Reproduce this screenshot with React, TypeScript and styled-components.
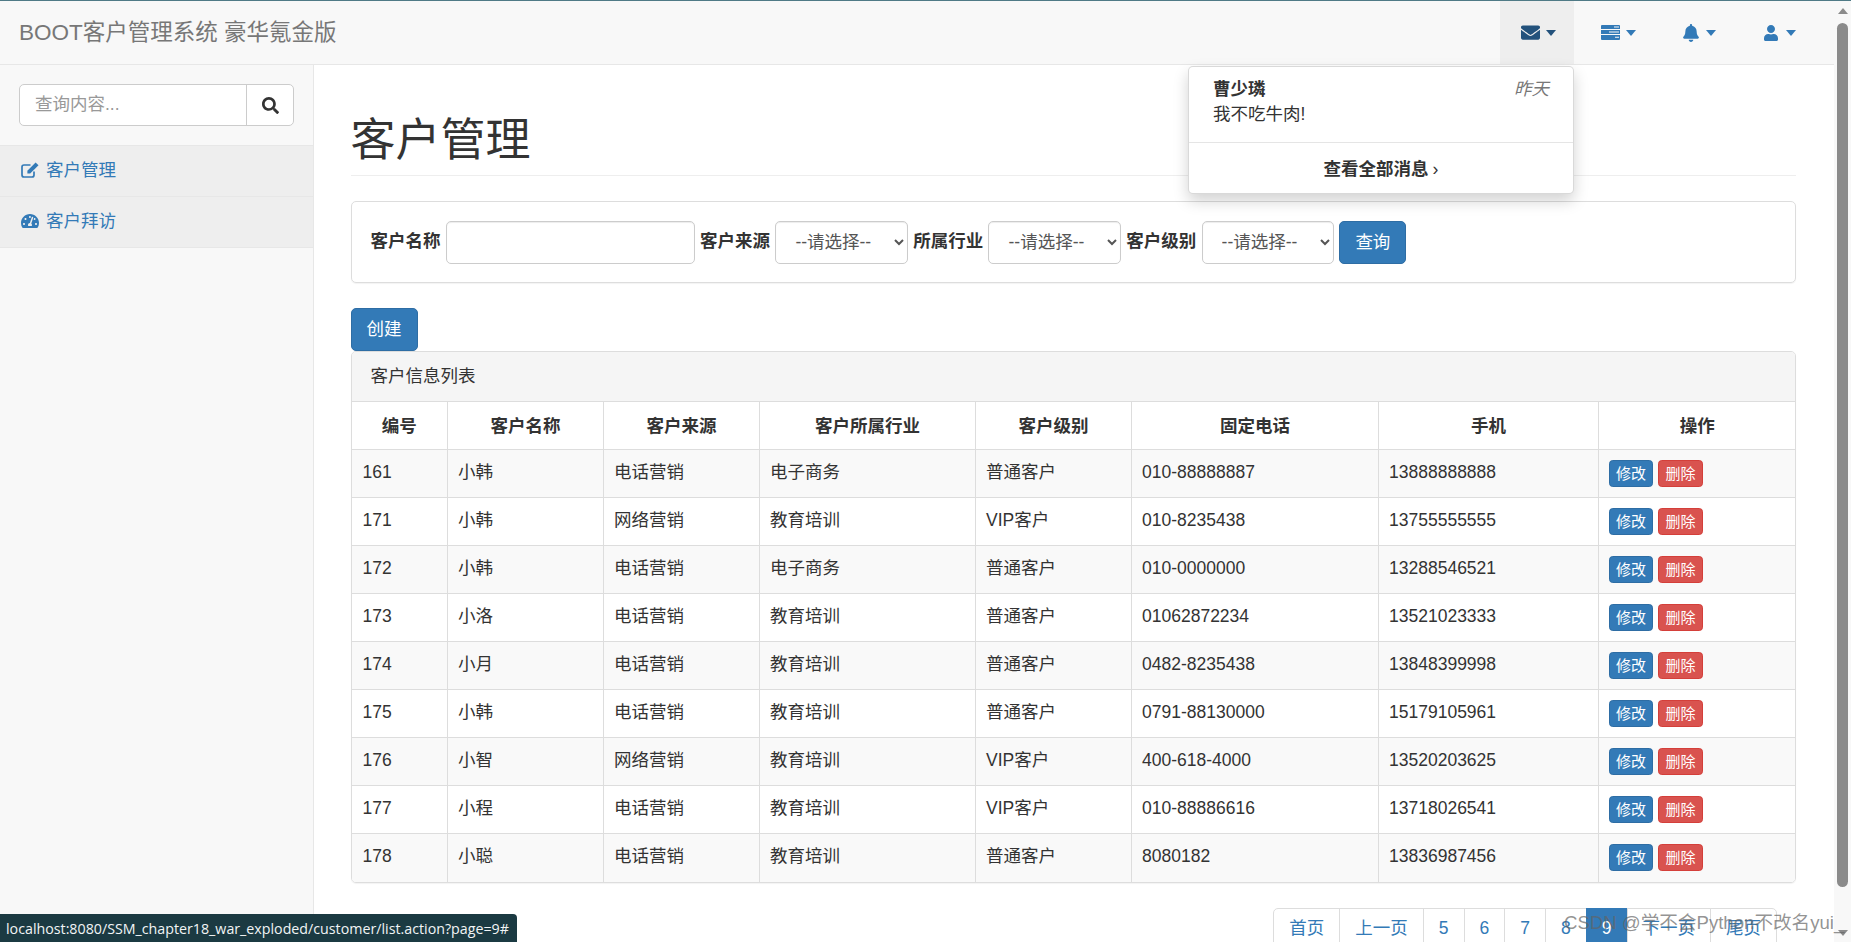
import React from "react";
import styled, { createGlobalStyle } from "styled-components";
import { FaEnvelope, FaBell, FaUser, FaSearch, FaTachometerAlt } from "react-icons/fa";

const Global = createGlobalStyle`
  html, body { margin: 0; padding: 0; height: 100%; overflow: hidden; background: #fff; }
  * { box-sizing: border-box; }
  body {
    font-family: "Liberation Sans", "Noto Sans CJK SC", sans-serif;
    font-size: 17.5px;
    line-height: 25px;
    color: #333;
  }
`;

const Shell = styled.div`
  position: relative;
  display: flex;
  height: 942px;
  border-top: 1px solid #4f7a86;
  overflow: hidden;
`;
const Page = styled.div`
  flex: 1;
  min-width: 0;
  display: flex;
  flex-direction: column;
`;
const Navbar = styled.header`
  height: 64px;
  flex: none;
  display: flex;
  justify-content: space-between;
  background: #f8f8f8;
  border-bottom: 1px solid #e7e7e7;
  padding: 0 20px 0 19px;
`;
const Brand = styled.div`
  font-size: 22.5px;
  line-height: 64px;
  color: #777;
`;
const NavList = styled.div`
  display: flex;
`;
const NavItem = styled.div<{ $active?: boolean }>`
  position: relative;
  display: flex;
  align-items: center;
  gap: 6px;
  height: 63px;
  padding: 0 18px 0 ${(p) => (p.$active ? "21px" : "27px")};
  color: ${(p) => (p.$active ? "#23527c" : "#337ab7")};
  background: ${(p) => (p.$active ? "#eee" : "transparent")};
`;
const IconSlot = styled.span`
  width: 19px;
  height: 19px;
  display: flex;
  align-items: center;
  justify-content: center;
`;
const Caret = styled.span`
  width: 0;
  height: 0;
  border-left: 5.5px solid transparent;
  border-right: 5.5px solid transparent;
  border-top: 6px solid currentColor;
`;
const Dropdown = styled.div`
  position: absolute;
  top: 65px;
  right: 0;
  width: 386px;
  height: 128px;
  background: #fff;
  border: 1px solid rgba(0, 0, 0, 0.15);
  border-radius: 5px;
  box-shadow: 0 7px 15px rgba(0, 0, 0, 0.175);
  z-index: 5;
  color: #333;
`;
const Message = styled.div`
  height: 76px;
  padding: 10px 24px 0;
  border-bottom: 1px solid #e5e5e5;
`;
const MessageHead = styled.div`
  display: flex;
  justify-content: space-between;
  font-weight: bold;
`;
const When = styled.em`
  font-weight: normal;
  color: #777;
`;
const SeeAll = styled.div`
  text-align: center;
  font-weight: bold;
  line-height: 53px;
`;
const Chevron = styled.span`
  font-weight: normal;
  margin-left: 4px;
`;
const Body = styled.div`
  flex: 1;
  min-height: 0;
  display: flex;
`;
const Sidebar = styled.aside`
  width: 314px;
  flex: none;
  background: #f8f8f8;
  border-right: 1px solid #e7e7e7;
`;
const SearchWrap = styled.div`
  height: 81px;
  padding: 19px 19px 0;
  border-bottom: 1px solid #e7e7e7;
`;
const SearchGroup = styled.div`
  display: flex;
  height: 42px;
  background: #fff;
  border: 1px solid #ccc;
  border-radius: 5px;
`;
const SearchInput = styled.input`
  flex: 1;
  min-width: 0;
  border: 0;
  outline: 0;
  background: transparent;
  padding: 0 15px 2px;
  font: inherit;
  &::placeholder { color: #999; }
`;
const SearchButton = styled.div`
  width: 47px;
  flex: none;
  border-left: 1px solid #ccc;
  display: flex;
  align-items: center;
  justify-content: center;
  font-size: 17px;
  color: #333;
`;
const SideItem = styled.div`
  height: 51px;
  display: flex;
  align-items: center;
  gap: 7px;
  padding: 0 0 2px 21px;
  color: #337ab7;
  background: #eee;
  border-bottom: 1px solid #e7e7e7;
  font-size: 17.5px;
`;
const Content = styled.main`
  flex: 1;
  min-width: 0;
  padding: 0 38.5px 0 36.5px;
  overflow: hidden;
`;
const PageHeader = styled.div`
  height: 111px;
  padding-top: 51px;
  border-bottom: 1px solid #eee;
  margin-bottom: 25px;
`;
const Title = styled.h1`
  margin: 0;
  font-size: 45px;
  line-height: 50px;
  font-weight: 400;
  color: #333;
`;
const FilterPanel = styled.div`
  height: 82px;
  border: 1px solid #ddd;
  border-radius: 5px;
  box-shadow: 0 1px 1px rgba(0, 0, 0, 0.05);
  padding: 19px;
  display: flex;
  align-items: flex-start;
  margin-bottom: 25px;
`;
const Label = styled.label`
  font-weight: bold;
  line-height: 40px;
  margin-right: 5.3px;
  white-space: nowrap;
`;
const NameInput = styled.input`
  width: 249px;
  height: 42.5px;
  margin-right: 5.3px;
  border: 1px solid #ccc;
  border-radius: 5px;
  box-shadow: inset 0 1px 1px rgba(0, 0, 0, 0.075);
  padding: 0 15px;
  font: inherit;
`;
const Select = styled.select`
  width: 132.5px;
  height: 42.5px;
  margin-right: 5.3px;
  border: 1px solid #ccc;
  border-radius: 5px;
  box-shadow: inset 0 1px 1px rgba(0, 0, 0, 0.075);
  padding: 0 15px;
  background: #fff;
  color: #555;
  font: inherit;
`;
const Button = styled.button`
  height: 42.5px;
  width: 67px;
  padding: 0;
  border: 1px solid #2e6da4;
  border-radius: 5px;
  background: #337ab7;
  color: #fff;
  font: inherit;
  display: block;
`;
const TablePanel = styled.section`
  border: 1px solid #ddd;
  border-radius: 5px;
  box-shadow: 0 1px 1px rgba(0, 0, 0, 0.05);
  margin-bottom: 25px;
  overflow: hidden;
`;
const PanelHeading = styled.div`
  height: 50px;
  line-height: 48px;
  padding: 0 19px;
  background: #f5f5f5;
  border-bottom: 1px solid #ddd;
`;
const Table = styled.table`
  width: 100%;
  table-layout: fixed;
  border-collapse: collapse;
`;
const Th = styled.th`
  height: 48px;
  padding: 2px 10px 0;
  text-align: center;
  font-weight: bold;
  border: 1px solid #ddd;
  border-top: 0;
  &:first-child { border-left: 0; }
  &:last-child { border-right: 0; }
`;
const Tr = styled.tr`
  &:nth-child(odd) { background: #f9f9f9; }
  &:last-child td { border-bottom: 0; }
`;
const Td = styled.td`
  height: 48px;
  padding: 0 10px 3px;
  border: 1px solid #ddd;
  &:first-child { border-left: 0; padding-left: 11px; }
  &:last-child { border-right: 0; padding-bottom: 0; }
`;
const Actions = styled.div`
  display: flex;
  gap: 5px;
`;
const SmallButton = styled.span<{ $danger?: boolean }>`
  display: block;
  width: ${(p) => (p.$danger ? "45px" : "44px")};
  height: 27px;
  line-height: 25px;
  text-align: center;
  font-size: 15px;
  color: #fff;
  border-radius: 3.75px;
  background: ${(p) => (p.$danger ? "#d9534f" : "#337ab7")};
  border: 1px solid ${(p) => (p.$danger ? "#d43f3a" : "#2e6da4")};
`;
const Pagination = styled.nav`
  display: flex;
  justify-content: flex-end;
  margin-right: 18.5px;
`;
const PageLink = styled.a<{ $active?: boolean }>`
  display: block;
  height: 42.5px;
  padding: 7px 15px;
  margin-left: -1px;
  color: ${(p) => (p.$active ? "#fff" : "#337ab7")};
  background: ${(p) => (p.$active ? "#337ab7" : "#fff")};
  border: 1px solid ${(p) => (p.$active ? "#337ab7" : "#ddd")};
  &:first-child { border-top-left-radius: 5px; border-bottom-left-radius: 5px; }
  &:last-child { border-top-right-radius: 5px; border-bottom-right-radius: 5px; }
`;
const Scrollbar = styled.div`
  width: 17px;
  flex: none;
  display: flex;
  flex-direction: column;
  align-items: center;
  padding: 7px 3px 6px;
  background: #f8f8f8;
`;
const ArrowUp = styled.span`
  flex: none;
  width: 0;
  height: 0;
  border-left: 5px solid transparent;
  border-right: 5px solid transparent;
  border-bottom: 6px solid #8b8b8b;
`;
const ArrowDown = styled(ArrowUp)`
  border-bottom: 0;
  border-top: 6px solid #8b8b8b;
  margin-top: auto;
`;
const Thumb = styled.div`
  width: 11px;
  height: 864px;
  margin-top: 9px;
  flex: none;
  background: #8b8b8b;
  border-radius: 6px;
`;
const StatusTip = styled.div`
  position: absolute;
  left: 0;
  bottom: 0;
  width: 517px;
  height: 28px;
  padding-left: 6px;
  background: #1b3a42;
  border-top-right-radius: 4px;
  color: #f2f5f6;
  font-family: "Open Sans", "Liberation Sans", sans-serif;
  font-size: 14.24px;
  line-height: 30px;
  white-space: nowrap;
  overflow: hidden;
  z-index: 6;
`;
const Watermark = styled.div`
  position: absolute;
  left: 1564px;
  top: 908px;
  color: rgba(100, 100, 100, 0.7);
  font-family: "Liberation Sans", "Noto Sans CJK SC", sans-serif;
  font-size: 18.6px;
  line-height: 28px;
  white-space: nowrap;
  z-index: 6;
`;

const TasksIcon = () => (
  <svg width="19" height="15" viewBox="0 0 19 15" fill="currentColor">
    <path fillRule="evenodd" d="M1 0h17a1 1 0 0 1 1 1v3H0V1a1 1 0 0 1 1-1Zm12 1.5v1h5v-1ZM0 5h19v4H0Zm8 1.5v1h10v-1ZM0 10h19v4a1 1 0 0 1-1 1H1a1 1 0 0 1-1-1Zm14 1.7v1h4v-1Z" />
  </svg>
);

const EditIcon = () => (
  <svg width="18" height="16" viewBox="0 0 18 16" fill="none">
    <path d="M13 9.5V13a2 2 0 0 1-2 2H3a2 2 0 0 1-2-2V5a2 2 0 0 1 2-2h6.5" stroke="currentColor" strokeWidth="1.7" />
    <path fill="currentColor" d="M14.6 0.4 17.5 3.2 9.2 11.5H6.4V8.7Z" />
  </svg>
);

const widths = [96, 156, 156, 216, 156, 247, 220, 197];
const headers = ["编号", "客户名称", "客户来源", "客户所属行业", "客户级别", "固定电话", "手机", "操作"];
const rows = [
  ["161", "小韩", "电话营销", "电子商务", "普通客户", "010-88888887", "13888888888"],
  ["171", "小韩", "网络营销", "教育培训", "VIP客户", "010-8235438", "13755555555"],
  ["172", "小韩", "电话营销", "电子商务", "普通客户", "010-0000000", "13288546521"],
  ["173", "小洛", "电话营销", "教育培训", "普通客户", "01062872234", "13521023333"],
  ["174", "小月", "电话营销", "教育培训", "普通客户", "0482-8235438", "13848399998"],
  ["175", "小韩", "电话营销", "教育培训", "普通客户", "0791-88130000", "15179105961"],
  ["176", "小智", "网络营销", "教育培训", "VIP客户", "400-618-4000", "13520203625"],
  ["177", "小程", "电话营销", "教育培训", "VIP客户", "010-88886616", "13718026541"],
  ["178", "小聪", "电话营销", "教育培训", "普通客户", "8080182", "13836987456"],
];
const pages = ["首页", "上一页", "5", "6", "7", "8", "9", "下一页", "尾页"];

export default function App() {
  return (
    <Shell>
      <Global />
      <Page>
        <Navbar>
          <Brand>BOOT客户管理系统 豪华氪金版</Brand>
          <NavList>
            <NavItem $active>
              <IconSlot><FaEnvelope size={19} /></IconSlot>
              <Caret />
              <Dropdown>
                <Message>
                  <MessageHead>
                    <span>曹少璘</span>
                    <When>昨天</When>
                  </MessageHead>
                  <div>我不吃牛肉!</div>
                </Message>
                <SeeAll>查看全部消息<Chevron>›</Chevron></SeeAll>
              </Dropdown>
            </NavItem>
            <NavItem><IconSlot><TasksIcon /></IconSlot><Caret /></NavItem>
            <NavItem><IconSlot><FaBell size={18} /></IconSlot><Caret /></NavItem>
            <NavItem><IconSlot><FaUser size={16} /></IconSlot><Caret /></NavItem>
          </NavList>
        </Navbar>
        <Body>
          <Sidebar>
            <SearchWrap>
              <SearchGroup>
                <SearchInput placeholder="查询内容..." />
                <SearchButton><FaSearch /></SearchButton>
              </SearchGroup>
            </SearchWrap>
            <SideItem><EditIcon />客户管理</SideItem>
            <SideItem><FaTachometerAlt size={18} />客户拜访</SideItem>
          </Sidebar>
          <Content>
            <PageHeader><Title>客户管理</Title></PageHeader>
            <FilterPanel>
              <Label>客户名称</Label>
              <NameInput />
              <Label>客户来源</Label>
              <Select><option>--请选择--</option></Select>
              <Label>所属行业</Label>
              <Select><option>--请选择--</option></Select>
              <Label>客户级别</Label>
              <Select><option>--请选择--</option></Select>
              <Button>查询</Button>
            </FilterPanel>
            <Button>创建</Button>
            <TablePanel>
              <PanelHeading>客户信息列表</PanelHeading>
              <Table>
                <colgroup>
                  {widths.map((w, i) => <col key={i} style={{ width: w }} />)}
                </colgroup>
                <thead>
                  <tr>{headers.map((h) => <Th key={h}>{h}</Th>)}</tr>
                </thead>
                <tbody>
                  {rows.map((r) => (
                    <Tr key={r[0]}>
                      {r.map((c, i) => <Td key={i}>{c}</Td>)}
                      <Td>
                        <Actions>
                          <SmallButton>修改</SmallButton>
                          <SmallButton $danger>删除</SmallButton>
                        </Actions>
                      </Td>
                    </Tr>
                  ))}
                </tbody>
              </Table>
            </TablePanel>
            <Pagination>
              {pages.map((p) => <PageLink key={p} $active={p === "9"}>{p}</PageLink>)}
            </Pagination>
          </Content>
        </Body>
      </Page>
      <Scrollbar>
        <ArrowUp />
        <Thumb />
        <ArrowDown />
      </Scrollbar>
      <StatusTip>localhost:8080/SSM_chapter18_war_exploded/customer/list.action?page=9#</StatusTip>
      <Watermark>CSDN @学不会Python不改名yui_</Watermark>
    </Shell>
  );
}
